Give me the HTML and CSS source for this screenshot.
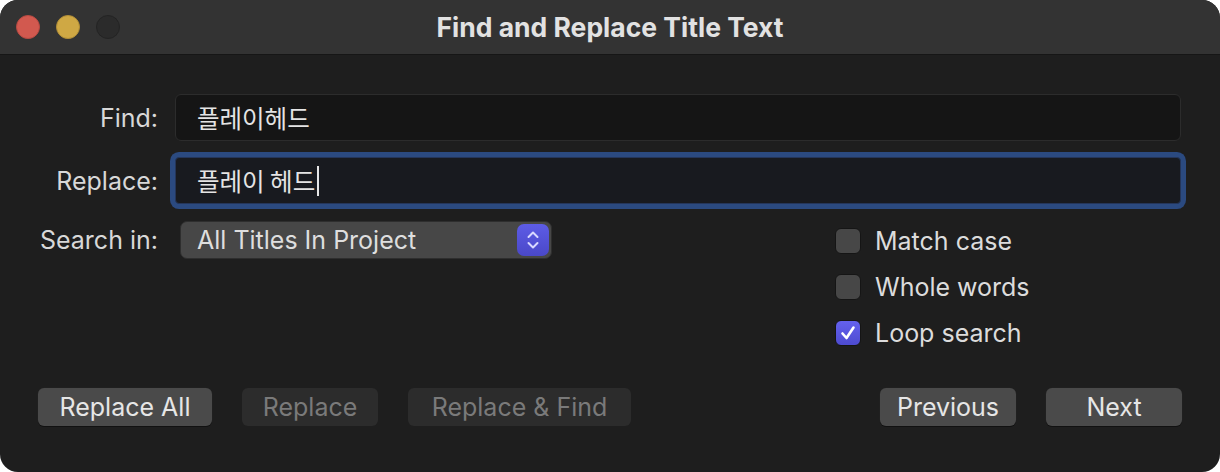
FILE: index.html
```html
<!DOCTYPE html>
<html lang="en">
<head>
<meta charset="utf-8">
<title>Find and Replace Title Text</title>
<link rel="stylesheet" href="styles.css">
</head>
<body>
<div class="window">
  <header class="titlebar">
    <div class="lights">
      <span class="light red"></span>
      <span class="light yellow"></span>
      <span class="light gray"></span>
    </div>
    <h1 class="title">Find and Replace Title Text</h1>
  </header>
  <main class="content">
    <div class="form">
      <label class="label">Find:</label>
      <div class="field"><span class="ko">플레이헤드</span></div>
      <label class="label">Replace:</label>
      <div class="field focused"><span class="ko">플레이 헤드</span><span class="caret"></span></div>
    </div>
    <div class="search-row">
      <label class="label">Search in:</label>
      <div class="popup">
        <span>All Titles In Project</span>
        <span class="stepper">
          <svg width="14" height="22" viewBox="0 0 14 22"><path d="M2.5 8 L7 3.5 L11.5 8 M2.5 14 L7 18.5 L11.5 14" fill="none" stroke="#d8d8ff" stroke-width="2" stroke-linecap="round" stroke-linejoin="round"/></svg>
        </span>
      </div>
      <div class="options">
        <div class="option"><span class="box"></span><span>Match case</span></div>
        <div class="option"><span class="box"></span><span>Whole words</span></div>
        <div class="option"><span class="box checked"><svg width="18" height="18" viewBox="0 0 18 18"><path d="M3.5 9.5 L7.5 14 L14.5 3.5" fill="none" stroke="#fff" stroke-width="2.6" stroke-linecap="round" stroke-linejoin="round"/></svg></span><span>Loop search</span></div>
      </div>
    </div>
    <div class="buttons">
      <div class="group">
        <button class="btn w174">Replace All</button>
        <button class="btn disabled w136">Replace</button>
        <button class="btn disabled w223">Replace &amp; Find</button>
      </div>
      <div class="group">
        <button class="btn w136">Previous</button>
        <button class="btn w136">Next</button>
      </div>
    </div>
  </main>
</div>
</body>
</html>
```

FILE: styles.css
```css
html, body {
  margin: 0;
  padding: 0;
  background: #ffffff;
}
body {
  width: 1220px;
  height: 472px;
  overflow: hidden;
  font-family: Inter, "Liberation Sans", "Noto Sans CJK KR", sans-serif;
  color: #dedede;
}
.window {
  width: 1220px;
  height: 472px;
  border-radius: 18px;
  overflow: hidden;
  background: #1e1e1e;
  display: flex;
  flex-direction: column;
}
.titlebar {
  height: 55px;
  flex: none;
  background: #333333;
  position: relative;
  display: flex;
  align-items: center;
  justify-content: center;
  border-bottom: 1px solid #161616;
  box-sizing: border-box;
}
.lights {
  position: absolute;
  left: 16px;
  top: 15px;
  display: flex;
  gap: 16px;
}
.light {
  width: 24px;
  height: 24px;
  border-radius: 50%;
  box-sizing: border-box;
}
.red { background: #d2594f; border: 1px solid #b64a42; }
.yellow { background: #cfa844; border: 1px solid #b08d37; }
.gray { background: #2b2b2b; border: 1px solid #242424; }
.title {
  margin: 0;
  font-size: 26.5px;
  font-weight: 700;
  color: #e2e2e2;
  letter-spacing: 0;
}
.content {
  flex: 1;
  padding: 39px 38px 0 0;
  display: flex;
  flex-direction: column;
}
.form {
  display: grid;
  grid-template-columns: 158px 1fr;
  column-gap: 17px;
  row-gap: 16px;
  align-items: center;
}
.label {
  text-align: right;
  font-size: 25px;
  color: #d8d8d8;
  white-space: nowrap;
}
.field {
  height: 47px;
  box-sizing: border-box;
  margin-right: 1px;
  background: #151515;
  border: 1px solid #2c2c2c;
  border-radius: 6px;
  display: flex;
  align-items: center;
  padding-left: 21px;
  color: #e4e4e4;
}
.ko {
  font-family: "Noto Sans CJK KR", sans-serif;
  font-size: 24.5px;
}
.field.focused {
  background: #181a1f;
  border: 1px solid #25365a;
  box-shadow: 0 0 0 5px #2b4a80;
  border-radius: 4px;
}
.caret {
  width: 2px;
  height: 30px;
  background: #e6e6e6;
  margin-left: 2px;
}
.search-row {
  display: flex;
  align-items: flex-start;
  margin-top: 17px;
}
.search-row > .label {
  width: 158px;
  flex: none;
  line-height: 38px;
}
.popup {
  margin-left: 22px;
  width: 372px;
  height: 38px;
  box-sizing: border-box;
  background: #474747;
  border: 1px solid #2e2e2e;
  border-radius: 7px;
  display: flex;
  align-items: center;
  justify-content: space-between;
  padding: 0 2px 0 16px;
  font-size: 25px;
  color: #dedede;
}
.stepper {
  width: 32px;
  height: 32px;
  border-radius: 7px;
  background: linear-gradient(#5d5ce6, #4a48c8);
  display: flex;
  align-items: center;
  justify-content: center;
}
.options {
  margin-left: 283px;
  margin-top: 7px;
  display: flex;
  flex-direction: column;
  gap: 20px;
}
.option {
  display: flex;
  align-items: center;
  gap: 14px;
  height: 26px;
  font-size: 25px;
  color: #dcdcdc;
}
.box {
  width: 26px;
  height: 26px;
  box-sizing: border-box;
  border-radius: 6px;
  background: #474747;
  border: 1px solid #151515;
  display: flex;
  align-items: center;
  justify-content: center;
}
.box.checked {
  background: linear-gradient(#6461ee, #4d4bd0);
}
.buttons {
  margin-top: 42px;
  padding-left: 38px;
  display: flex;
  justify-content: space-between;
}
.group {
  display: flex;
  gap: 30px;
}
.btn {
  height: 38px;
  box-sizing: border-box;
  border-radius: 6px;
  border: none;
  background: #4a4a4a;
  box-shadow: 0 1px 0 #111, 0 0 0 0.5px #222;
  font-family: Inter, "Liberation Sans", sans-serif;
  font-size: 25px;
  color: #e6e6e6;
  padding: 0;
}
.btn.disabled {
  background: #2c2c2c;
  color: #7a7a7a;
  box-shadow: none;
}
.w174 { width: 174px; }
.w136 { width: 136px; }
.w223 { width: 223px; }
```
